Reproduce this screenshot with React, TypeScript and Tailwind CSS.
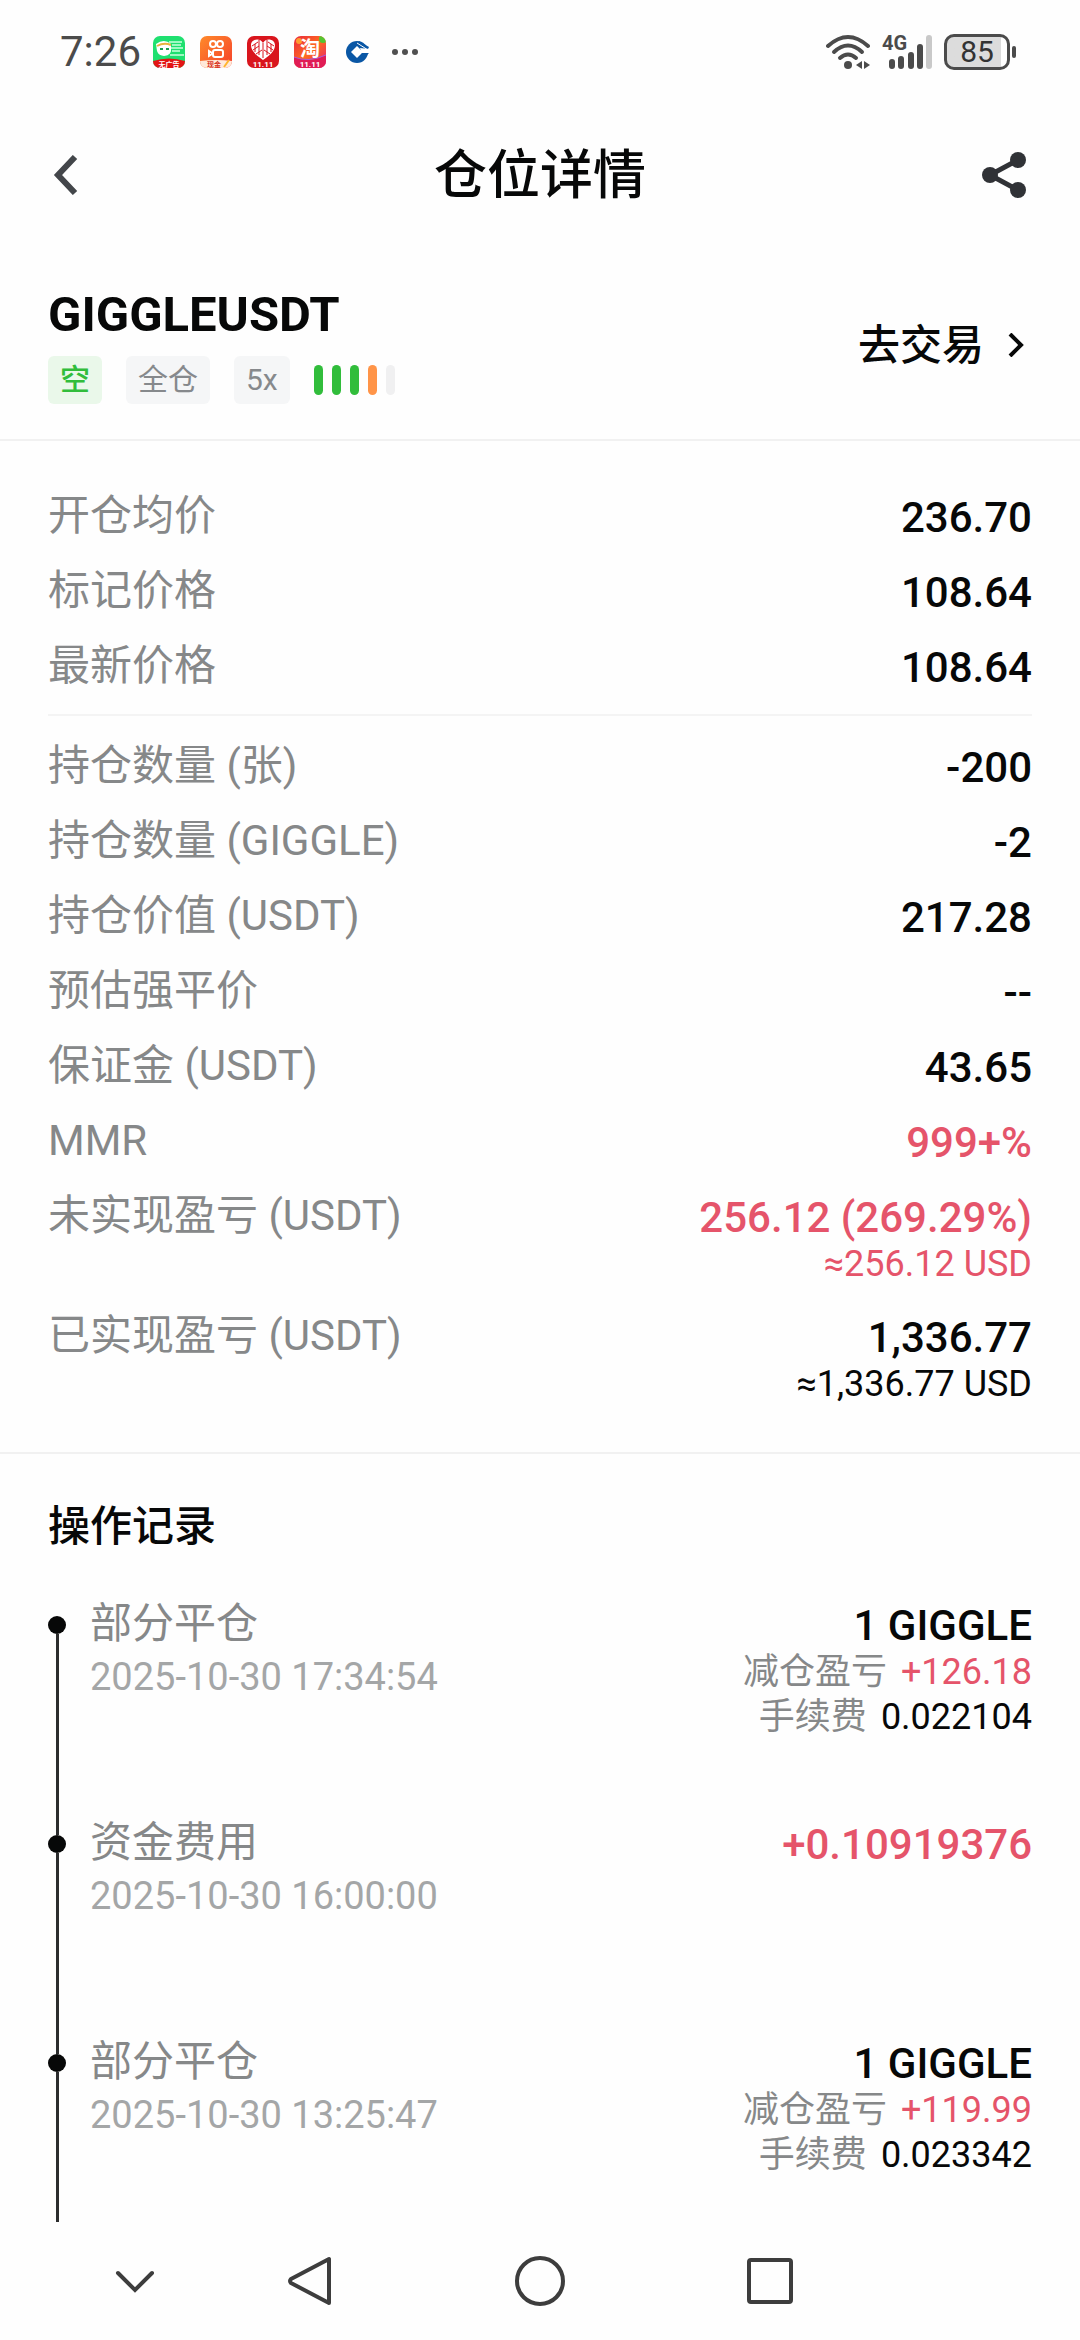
import clsx from 'clsx'

type Tone = 'default' | 'red'

type Row = {
  label: string
  value: string
  sub?: string
  tone?: Tone
}

type RecordItem = {
  id: number
  title: string
  time: string
  amount: string
  tone?: Tone
  profit?: string
  fee?: string
}

const priceRows: Row[] = [
  { label: '开仓均价', value: '236.70' },
  { label: '标记价格', value: '108.64' },
  { label: '最新价格', value: '108.64' },
]

const positionRows: Row[] = [
  { label: '持仓数量 (张)', value: '-200' },
  { label: '持仓数量 (GIGGLE)', value: '-2' },
  { label: '持仓价值 (USDT)', value: '217.28' },
  { label: '预估强平价', value: '--' },
  { label: '保证金 (USDT)', value: '43.65' },
  { label: 'MMR', value: '999+%', tone: 'red' },
  {
    label: '未实现盈亏 (USDT)',
    value: '256.12 (269.29%)',
    sub: '≈256.12 USD',
    tone: 'red',
  },
  { label: '已实现盈亏 (USDT)', value: '1,336.77', sub: '≈1,336.77 USD' },
]

const records: RecordItem[] = [
  {
    id: 1,
    title: '部分平仓',
    time: '2025-10-30 17:34:54',
    amount: '1 GIGGLE',
    profit: '+126.18',
    fee: '0.022104',
  },
  {
    id: 2,
    title: '资金费用',
    time: '2025-10-30 16:00:00',
    amount: '+0.10919376',
    tone: 'red',
  },
  {
    id: 3,
    title: '部分平仓',
    time: '2025-10-30 13:25:47',
    amount: '1 GIGGLE',
    profit: '+119.99',
    fee: '0.023342',
  },
]

const riskBars = [
  'bg-[#31bd3b]',
  'bg-[#31bd3b]',
  'bg-[#31bd3b]',
  'bg-[#ff9448]',
  'bg-[#f0f0f1]',
]

const AppIcons = () => (
  <div className="flex items-center gap-[15px]">
    <svg className="size-8" viewBox="0 0 32 32" aria-hidden="true">
      <clipPath id="round">
        <rect width="32" height="32" rx="7" />
      </clipPath>
      <g clipPath="url(#round)">
        <rect width="32" height="32" fill="#1fe070" />
        <path
          d="M16 6h13M19 9h9M18 12h12M19 15h8M17 19h14"
          stroke="#c9ffdd"
          strokeWidth="1.5"
        />
        <path d="M3 8q8-6 15 0v7c-1 6-12 7-14 0z" fill="#fff" />
        <path d="M4 10q7-4 14-1" stroke="#e8b23c" strokeWidth="2" fill="none" />
        <path d="M7 13h3M13 13h3" stroke="#1a9c4c" strokeWidth="2" />
        <path d="M0 25q16-5 32 0v7H0z" fill="#e31414" />
        <text x="16" y="31" fontSize="7" fontWeight="700" fill="#fff" textAnchor="middle">
          无广告
        </text>
      </g>
    </svg>
    <svg className="size-8" viewBox="0 0 32 32" aria-hidden="true">
      <defs>
        <linearGradient id="video" x1="0" y1="0" x2="1" y2="1">
          <stop offset="0" stopColor="#ff8a2a" />
          <stop offset="1" stopColor="#f5402c" />
        </linearGradient>
      </defs>
      <g clipPath="url(#round)">
        <rect width="32" height="32" fill="url(#video)" />
        <g stroke="#fff" strokeWidth="2" fill="none">
          <circle cx="13" cy="8" r="3" />
          <circle cx="20" cy="8" r="3" />
          <rect x="13" y="14" width="10" height="7" rx="2" />
          <path d="M9 15v5l3-2v-1z" />
        </g>
        <path d="M0 25q16-2 32 0v7H0z" fill="#ffe9da" />
        <text x="14" y="31" fontSize="7" fontWeight="700" fill="#d8321d" textAnchor="middle">
          现金
        </text>
        <path d="m24 31 5-7" stroke="#ffb52e" strokeWidth="2" />
      </g>
    </svg>
    <svg className="size-8" viewBox="0 0 32 32" aria-hidden="true">
      <g clipPath="url(#round)">
        <rect width="32" height="32" fill="#d9151d" />
        <path
          d="M16 24C9 19 4 15 4 9c0-6 9-8 12-2 3-6 12-4 12 2 0 6-5 10-12 15z"
          fill="#fff"
        />
        <path
          d="M16 7v15M12 4v15M20 4v15M5 10l6-4M6 14l6-4M9 18l6-4M21 6l6 4M20 10l6 4M17 14l6 4M8 8v8M24 8v8"
          stroke="#d9151d"
          strokeWidth="1"
        />
        <text x="16" y="31" fontSize="8" fontWeight="700" fill="#fff" textAnchor="middle">
          11.11
        </text>
      </g>
    </svg>
    <svg className="size-8" viewBox="0 0 32 32" aria-hidden="true">
      <defs>
        <linearGradient id="shop" x1="0" y1="0" x2="1" y2="1">
          <stop offset="0" stopColor="#e8273f" />
          <stop offset="0.5" stopColor="#ff6a1f" />
          <stop offset="1" stopColor="#e3177c" />
        </linearGradient>
      </defs>
      <g clipPath="url(#round)">
        <rect width="32" height="32" fill="url(#shop)" />
        <circle cx="29" cy="3" r="4" fill="#55c531" />
        <circle cx="5" cy="5" r="3" fill="#ff9b2f" />
        <path d="M0 21q16 7 32-2v13H0z" fill="#e01c55" />
        <path d="M0 21q14 6 32-2" stroke="#a45be0" strokeWidth="1" fill="none" />
        <text x="16" y="20" fontSize="20" fontWeight="700" fill="#fff" textAnchor="middle">
          淘
        </text>
        <text x="16" y="31" fontSize="8" fontWeight="700" fill="#fff" textAnchor="middle">
          11.11
        </text>
      </g>
    </svg>
    <svg className="ml-1 size-6" viewBox="0 0 24 24" aria-hidden="true">
      <circle cx="12" cy="12" r="11" fill="#0a57a5" />
      <path d="m12 6 6 6-6 6-6-6z" fill="#fff" />
      <path d="m15 8 9 1v4h-7z" fill="#fff" />
      <path d="m14 1 10 6-1 2-10-6z" fill="#0a57a5" />
      <path d="m12 3 11 7" stroke="#fff" strokeWidth="1" />
      <path d="M17 13h7l-3 3h-5z" fill="#0a57a5" />
    </svg>
    <svg className="ml-2 h-2 w-7" viewBox="0 0 28 8" fill="#505050" aria-hidden="true">
      <circle cx="3" cy="4" r="3" />
      <circle cx="13" cy="4" r="3" />
      <circle cx="23" cy="4" r="3" />
    </svg>
  </div>
)

const StatusBar = () => (
  <div className="flex h-[104px] items-center justify-between pr-16 pl-15 text-[#4b4b4b]">
    <div className="flex items-center gap-3">
      <span className="text-[42px] leading-none">7:26</span>
      <AppIcons />
    </div>
    <div className="flex items-center gap-3">
      <svg className="h-9 w-11" viewBox="0 0 44 36" fill="none" aria-hidden="true">
        <g stroke="#4b4b4b" strokeWidth="4" strokeLinecap="round">
          <path d="M2 12q20-18 40 0" />
          <path d="M8 18q14-13 28 0" />
          <path d="M14 24q8-7 16 0" />
        </g>
        <circle cx="22" cy="31" r="4" fill="#4b4b4b" />
        <path d="m36 27-6 4 6 4zM38 27v8l6-4z" fill="#4b4b4b" />
      </svg>
      <svg className="h-11 w-[50px]" viewBox="0 -4 50 44" aria-hidden="true">
        <text x="0" y="16" fontSize="20" fontWeight="700" fill="#4b4b4b">
          4G
        </text>
        <g strokeWidth="6" strokeLinecap="round" stroke="#4b4b4b">
          <path d="M10 28v4M19 25v7M29 21v11M38 13v19" />
          <path d="M47 4v28" stroke="#c9c9c9" />
        </g>
      </svg>
      <div className="flex items-center gap-[2px]">
        <div className="flex h-9 w-[66px] items-center justify-center rounded-[10px] border-[3px] border-[#4b4b4b] bg-linear-to-r from-[#dcdcdc] from-90% to-white to-90% text-[30px] leading-none text-[#333]">
          85
        </div>
        <div className="h-3 w-1 rounded-full bg-[#4b4b4b]" />
      </div>
    </div>
  </div>
)

const Header = () => (
  <header className="grid h-[142px] grid-cols-[1fr_auto_1fr] items-center px-12">
    <button type="button" aria-label="返回" className="justify-self-start">
      <svg className="h-10 w-9" viewBox="0 0 36 40" fill="none" aria-hidden="true">
        <path d="M27 2 10 20l17 18" stroke="#43464a" strokeWidth="6" />
      </svg>
    </button>
    <h1 className="pt-[2px] text-[53px] leading-none font-medium">仓位详情</h1>
    <button type="button" aria-label="分享" className="justify-self-end pr-1">
      <svg className="size-12" viewBox="0 0 48 48" aria-hidden="true">
        <path d="M38 9 10 24l28 15" fill="none" stroke="#303236" strokeWidth="5" />
        <g fill="#303236">
          <circle cx="38" cy="9" r="8" />
          <circle cx="10" cy="24" r="8" />
          <circle cx="38" cy="39" r="8" />
        </g>
      </svg>
    </button>
  </header>
)

const Tag = ({ text, green }: { text: string; green?: boolean }) => (
  <span
    className={clsx(
      'flex h-12 items-center rounded-md px-3 text-[30px] leading-none',
      green
        ? 'bg-[#eaf8ea] font-medium text-[#31bd3b]'
        : 'bg-[#f5f6f7] text-[#86898c]'
    )}
  >
    {text}
  </span>
)

const SymbolBar = () => (
  <section className="flex items-center justify-between border-b-2 border-[#f1f1f1] px-12 pt-10 pb-[35px]">
    <div className="flex flex-col gap-3">
      <h2 className="text-[49px] leading-[58px] font-bold">GIGGLEUSDT</h2>
      <div className="flex items-center gap-6">
        <Tag text="空" green />
        <Tag text="全仓" />
        <Tag text="5x" />
        <div className="flex gap-[9px]">
          {riskBars.map((color, idx) => (
            <span key={idx} className={clsx('h-[30px] w-[9px] rounded-full', color)} />
          ))}
        </div>
      </div>
    </div>
    <a href="#trade" className="flex items-center gap-6 text-[42px] leading-[49px] font-medium">
      去交易
      <svg className="h-6 w-6" viewBox="0 0 24 24" fill="none" aria-hidden="true">
        <path d="m2 1 11 11L2 23" stroke="#070808" strokeWidth="4" />
      </svg>
    </a>
  </section>
)

const RowList = ({ rows }: { rows: Row[] }) => (
  <dl>
    {rows.map((row) => (
      <div key={row.label} className="flex justify-between py-[13px]">
        <dt className="text-[42px] leading-[46px] text-[#868889]">{row.label}</dt>
        <dd className={clsx('text-right', row.tone === 'red' && 'text-[#e5546a]')}>
          <p className="text-[42px] leading-[49px] font-medium">{row.value}</p>
          {row.sub && <p className="text-[36px] leading-[45px]">{row.sub}</p>}
        </dd>
      </div>
    ))}
  </dl>
)

const RecordRow = ({ item, first, last }: { item: RecordItem; first: boolean; last: boolean }) => (
  <li className={clsx('flex gap-6', last ? 'min-h-[183px]' : 'min-h-[219px]')}>
    <div className="flex w-[18px] flex-col items-center">
      <span className={clsx('h-[15px] w-[3px]', !first && 'bg-[#2c2d2e]')} />
      <span className="size-[18px] rounded-full bg-[#070808]" />
      <span className="w-[3px] flex-1 bg-[#2c2d2e]" />
    </div>
    <div className="flex-1">
      <h3 className="text-[42px] leading-[46px] text-[#868889]">{item.title}</h3>
      <time className="mt-[6px] block text-[38px] leading-[48px] text-[#a4a6a7]">{item.time}</time>
    </div>
    <div className="text-right">
      <p
        className={clsx(
          'text-[42px] leading-[49px] font-medium',
          item.tone === 'red' && 'text-[#e5546a]'
        )}
      >
        {item.amount}
      </p>
      {item.profit && (
        <p className="flex justify-end gap-[14px] text-[36px] leading-[45px] text-[#e5546a]">
          <span className="text-[#868889]">减仓盈亏</span>
          {item.profit}
        </p>
      )}
      {item.fee && (
        <p className="flex justify-end gap-[14px] text-[36px] leading-[45px]">
          <span className="text-[#868889]">手续费</span>
          {item.fee}
        </p>
      )}
    </div>
  </li>
)

const NavBar = () => (
  <nav className="grid h-[118px] grid-cols-[1fr_230px_230px_230px_1fr] items-center justify-items-center">
    <button type="button" aria-label="收起" className="justify-self-end pr-10">
      <svg className="h-10 w-10" viewBox="0 0 40 40" fill="none" aria-hidden="true">
        <path
          d="m3 12 17 17 17-17"
          stroke="#3d3d3d"
          strokeWidth="4"
          strokeLinecap="round"
        />
      </svg>
    </button>
    <button type="button" aria-label="后退">
      <svg className="h-13 w-12" viewBox="0 0 48 52" fill="none" aria-hidden="true">
        <path
          d="M43 4v44L5 28q-2-2 0-4z"
          stroke="#3d3d3d"
          strokeWidth="4"
          strokeLinejoin="round"
        />
      </svg>
    </button>
    <button type="button" aria-label="主页">
      <svg className="size-13" viewBox="0 0 52 52" fill="none" aria-hidden="true">
        <circle cx="26" cy="26" r="23" stroke="#3d3d3d" strokeWidth="4" />
      </svg>
    </button>
    <button type="button" aria-label="最近任务">
      <svg className="size-12" viewBox="0 0 48 48" fill="none" aria-hidden="true">
        <rect x="3" y="3" width="42" height="42" rx="2" stroke="#3d3d3d" strokeWidth="4" />
      </svg>
    </button>
  </nav>
)

export default function App() {
  return (
    <div className="flex min-h-screen flex-col bg-[#fefefe] font-['Roboto','Noto_Sans_CJK_SC',sans-serif] text-[#070808]">
      <StatusBar />
      <Header />
      <main className="flex-1">
        <SymbolBar />
        <section className="border-b-2 border-[#f1f1f1] px-12 pt-[39px] pb-8">
          <RowList rows={priceRows} />
          <hr className="mt-[9px] mb-[14px] border-t-2 border-[#f4f4f4]" />
          <RowList rows={positionRows} />
        </section>
        <section className="px-12 pt-12">
          <h2 className="mb-[50px] text-[42px] leading-[49px] font-medium">操作记录</h2>
          <ol>
            {records.map((item, idx) => (
              <RecordRow
                key={item.id}
                item={item}
                first={idx === 0}
                last={idx === records.length - 1}
              />
            ))}
          </ol>
        </section>
      </main>
      <NavBar />
    </div>
  )
}
